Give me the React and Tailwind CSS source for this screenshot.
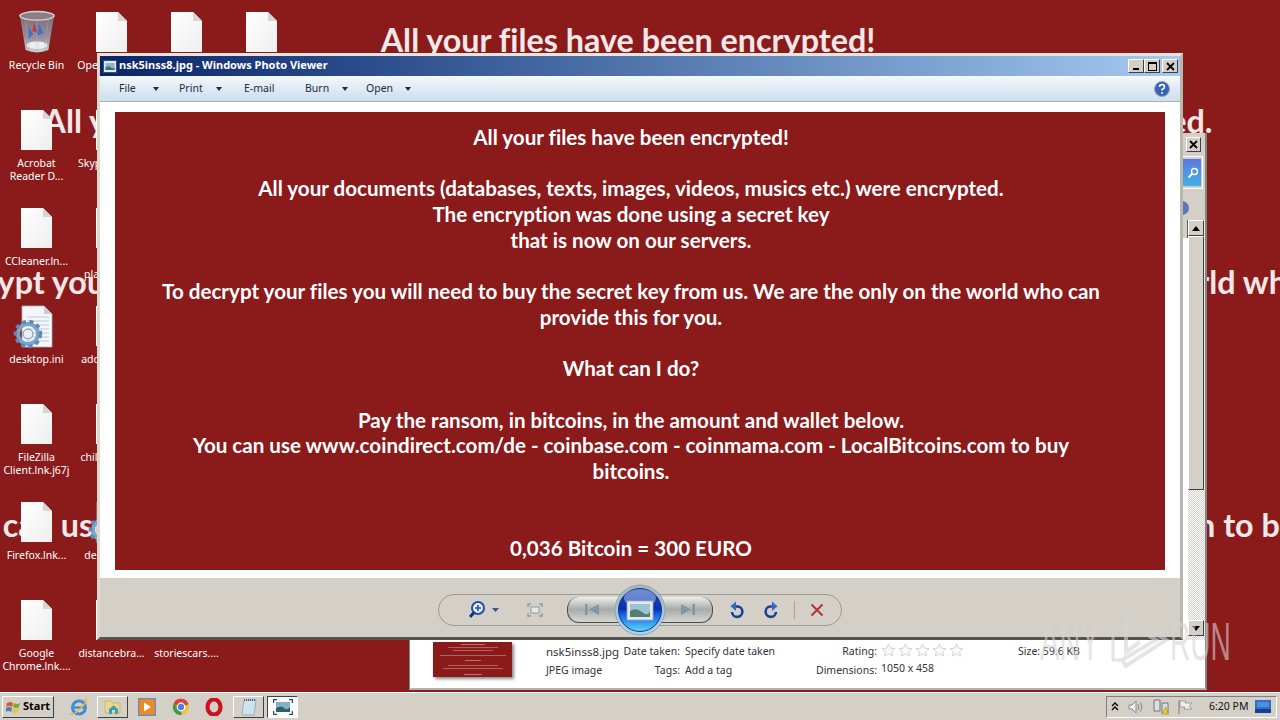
import React from 'react';

const ransomLines = [
  'All your files have been encrypted!',
  '',
  'All your documents (databases, texts, images, videos, musics etc.) were encrypted.',
  'The encryption was done using a secret key',
  'that is now on our servers.',
  '',
  'To decrypt your files you will need to buy the secret key from us. We are the only on the world who can',
  'provide this for you.',
  '',
  'What can I do?',
  '',
  'Pay the ransom, in bitcoins, in the amount and wallet below.',
  'You can use www.coindirect.com/de - coinbase.com - coinmama.com - LocalBitcoins.com to buy',
  'bitcoins.',
  '',
  '',
  '0,036 Bitcoin = 300 EURO',
];

const desktopIcons = [
  { label: ['Recycle Bin'], icon: 'bin' },
  { label: ['Acrobat', 'Reader D...'], icon: 'file' },
  { label: ['CCleaner.ln...'], icon: 'file' },
  { label: ['desktop.ini'], icon: 'ini' },
  { label: ['FileZilla', 'Client.lnk.j67j'], icon: 'file' },
  { label: ['Firefox.lnk...'], icon: 'file' },
  { label: ['Google', 'Chrome.lnk....'], icon: 'file' },

  { label: ['Opera.lnk.j67j'], icon: 'file' },
  { label: ['Skype.lnk.j67j'], icon: 'file' },
  { label: ['VLC', 'player.lnk...'], icon: 'file' },
  { label: ['additional....'], icon: 'file' },
  { label: ['childrenca....'], icon: 'file' },
  { label: ['desktop.ini'], icon: 'ini' },
  { label: ['distancebra...'], icon: 'file' },

  { label: [''], icon: 'file' },
  { label: [''], icon: 'none' },
  { label: [''], icon: 'none' },
  { label: [''], icon: 'none' },
  { label: [''], icon: 'none' },
  { label: [''], icon: 'none' },
  { label: ['storiescars....'], icon: 'file' },

  { label: [''], icon: 'file' },
];

const FileIcon = () => (
  <svg width="33" height="42" viewBox="0 0 33 42">
    <defs>
      <linearGradient id="pageFill" x1="0" y1="0" x2="1" y2="1">
        <stop offset="0" stopColor="#ffffff" />
        <stop offset="1" stopColor="#eeeeee" />
      </linearGradient>
    </defs>
    <path d="M1 1H23L32 10V41H1Z" fill="url(#pageFill)" />
    <path d="M23 1L32 10H23Z" fill="#d6d6d6" />
  </svg>
);

const BinIcon = () => (
  <svg width="38" height="46" viewBox="0 0 40 46">
    <defs>
      <linearGradient id="binFill" x1="0" y1="0" x2="0" y2="1">
        <stop offset="0" stopColor="#7f6e78" />
        <stop offset="0.6" stopColor="#9a8f9c" />
        <stop offset="1" stopColor="#c9d3d3" />
      </linearGradient>
    </defs>
    <path d="M2 6L8 42Q20 47 32 42L38 6Z" fill="url(#binFill)" />
    <ellipse cx="20" cy="6" rx="18" ry="4.5" fill="#8d7e86" stroke="#d5d5d5" strokeWidth="1.5" />
    <path d="M11 17L16 25L11 31ZM22 14L27 24L20 27Z" fill="#3f76c4" />
    <path d="M17 13L21 24L15 22Z" fill="#b5424a" />
    <ellipse cx="20" cy="37" rx="11" ry="4" fill="#e9eeee" />
    <path d="M8 10L12 41M32 10L28 41M20 11V44" stroke="#b7afb6" strokeWidth="0.6" opacity="0.7" />
  </svg>
);

const IniIcon = () => (
  <svg width="42" height="44" viewBox="0 0 42 44">
    <path d="M9 1H31L39 9V42H9Z" fill="#f4f6f8" stroke="#a9b3bd" strokeWidth="0.8" />
    <path d="M31 1L39 9H31Z" fill="#c9ced4" />
    <path d="M14 12H36M14 16H36M14 20H36M14 24H36M14 28H36M14 32H36M14 36H36" stroke="#bcc9d8" strokeWidth="1" />
    <circle cx="15" cy="29" r="10" fill="none" stroke="#7ea3c9" strokeWidth="4" />
    <circle cx="15" cy="29" r="12.5" fill="none" stroke="#5e88b5" strokeWidth="3.5" strokeDasharray="4 3.5" />
    <circle cx="15" cy="29" r="5" fill="#e9eff5" stroke="#6d8fb3" strokeWidth="1" />
  </svg>
);

const DesktopIcon = ({ label, icon }) => (
  <div className="h-[98px] w-[75px] flex flex-col items-center">
    <div className="h-[46px] w-full flex justify-center items-start">
      {icon === 'file' && <FileIcon />}
      {icon === 'bin' && <div className="-mt-[2px]"><BinIcon /></div>}
      {icon === 'ini' && <div className="-ml-[6px]"><IniIcon /></div>}
    </div>
    <div className="mt-[2px] text-white text-center text-[10.5px] leading-[13px] whitespace-nowrap">
      {label.map((line) => (
        <div key={line}>{line}</div>
      ))}
    </div>
  </div>
);

const WinButton = ({ children, className = '' }) => (
  <div className={`flex items-center justify-center bg-[#d4d0c8] border border-t-white border-l-white border-r-[#404040] border-b-[#404040] ${className}`}>
    {children}
  </div>
);

const CloseGlyph = () => (
  <svg width="9" height="9" viewBox="0 0 9 9">
    <path d="M1 1L8 8M8 1L1 8" stroke="#000" strokeWidth="1.8" />
  </svg>
);

const Arrow = () => (
  <svg width="6" height="4" viewBox="0 0 6 4" className="shrink-0">
    <path d="M0 0H6L3 4Z" fill="#1d2c40" />
  </svg>
);

const toolbarItems = [
  { name: 'File', width: 'w-[60px]', labelWidth: 'w-[34px]', arrow: true },
  { name: 'Print', width: 'w-[65px]', labelWidth: 'w-[37px]', arrow: true },
  { name: 'E-mail', width: 'w-[61px]', labelWidth: 'w-[37px]', arrow: false },
  { name: 'Burn', width: 'w-[61px]', labelWidth: 'w-[37px]', arrow: true },
  { name: 'Open', width: 'w-[50px]', labelWidth: 'w-[39px]', arrow: true },
];

const Orb = () => (
  <svg width="52" height="52" viewBox="0 0 52 52">
    <defs>
      <linearGradient id="orbBlue" x1="0" y1="0" x2="0" y2="1">
        <stop offset="0" stopColor="#1c50b8" />
        <stop offset="0.48" stopColor="#0a2fb0" />
        <stop offset="0.55" stopColor="#0a52e0" />
        <stop offset="1" stopColor="#5fd8f8" />
      </linearGradient>
      <linearGradient id="orbRing" x1="0" y1="0" x2="0" y2="1">
        <stop offset="0" stopColor="#aab4bc" />
        <stop offset="1" stopColor="#a8d4ee" />
      </linearGradient>
    </defs>
    <circle cx="26" cy="26" r="25" fill="url(#orbRing)" stroke="#8d9aa3" strokeWidth="0.8" />
    <circle cx="26" cy="26" r="21.5" fill="url(#orbBlue)" stroke="#0d3a8e" strokeWidth="1" />
    <ellipse cx="26" cy="14" rx="16" ry="9" fill="#ffffff" opacity="0.35" />
    <rect x="13" y="17" width="26" height="19" fill="#e6e8e8" stroke="#9aa8b0" strokeWidth="0.8" />
    <rect x="16" y="20" width="20" height="13" fill="#9fc3d4" />
    <path d="M16 33V27Q22 23 28 28T36 27V33Z" fill="#4d7f72" />
  </svg>
);

const RotateIcon = ({ flip }) => (
  <svg width="16" height="18" viewBox="0 0 16 18" className={flip ? '-scale-x-100' : ''}>
    <path d="M5 5.5H8.5A5.2 5.2 0 1 1 3 11" fill="none" stroke="#1c3f8f" strokeWidth="2.6" />
    <path d="M7 0.5V10L1.5 5.3Z" fill="#2f6cc5" />
  </svg>
);

const Star = () => (
  <svg width="15" height="14" viewBox="0 0 15 14">
    <path d="M7.5 1L9.4 5.1L14 5.6L10.6 8.6L11.6 13L7.5 10.7L3.4 13L4.4 8.6L1 5.6L5.6 5.1Z" fill="#fbfbfb" stroke="#cfd3d6" />
  </svg>
);

const Watermark = () => (
  <div className="absolute left-[1040px] top-[610px] w-[192px] h-[58px] text-[#d4d4d4]/60 pointer-events-none font-['Liberation_Sans'] text-[53px] leading-[58px]">
    <span className="absolute left-0 top-[3px] scale-x-[0.55] origin-left whitespace-nowrap">ANY</span>
    <svg width="62" height="58" viewBox="0 0 62 58" className="absolute left-[70px] top-0">
      <path d="M10 16H3V50H10" fill="none" stroke="currentColor" strokeWidth="3" />
      <path d="M12 2L56 30L16 56L12 50L46 30L16 11V42L30 32" fill="none" stroke="currentColor" strokeWidth="4" />
    </svg>
    <span className="absolute left-[130px] top-[3px] scale-x-[0.53] origin-left whitespace-nowrap">RUN</span>
  </div>
);

const BackWindow = () => (
  <div className="absolute left-[409px] top-[133px] w-[798px] h-[557px] flex flex-col bg-[#d4d0c8] border-r-2 border-b-2 border-l border-l-[#7a8a80] border-r-[#7a8a80] border-b-[#b5b5b0]">
    <div className="h-[507px] shrink-0 flex justify-end">
      {/* right edge of the explorer window behind the viewer */}
      <div className="w-[23px] flex flex-col items-end pt-[4px]">
        <WinButton className="w-[15px] h-[15px] mr-[4px] shrink-0">
          <CloseGlyph />
        </WinButton>
        <div className="mt-[4px] w-[21px] h-[33px] mr-[2px] shrink-0 border-y border-r border-white pr-[1px] py-[2px]">
          <div className="w-full h-[27px] bg-gradient-to-b from-[#5a78e0] to-[#3fb0e8] flex items-center justify-end pr-[2px]">
            <svg width="12" height="12" viewBox="0 0 12 12">
              <circle cx="7.5" cy="4.5" r="3" fill="none" stroke="#fff" strokeWidth="1.4" />
              <path d="M5.5 6.5L1.5 10.5" stroke="#fff" strokeWidth="1.8" />
            </svg>
          </div>
        </div>
        <div className="mt-[12px] h-[14px] w-full shrink-0">
          <div className="w-[7px] h-[14px] rounded-r-full bg-[#5a78c0]" />
        </div>
        <div className="mt-[5px] flex-1 w-full flex">
          <div className="w-[6px] flex flex-col">
            <div className="h-[18px] border-r border-[#606060] bg-[#d4d0c8]" />
            <div className="flex-1 bg-white" />
          </div>
          <div className="w-[17px] flex flex-col bg-[repeating-conic-gradient(#d4d0c8_0_25%,#ffffff_0_50%)] bg-[length:2px_2px]">
            <WinButton className="w-[16px] h-[16px] shrink-0">
              <svg width="8" height="5" viewBox="0 0 8 5"><path d="M4 0L8 5H0Z" fill="#000" /></svg>
            </WinButton>
            <div className="w-[16px] h-[254px] bg-[#d4d0c8] border border-t-white border-l-white border-r-[#404040] border-b-[#404040]" />
            <div className="flex-1" />
            <WinButton className="w-[16px] h-[16px] shrink-0 mb-[4px]">
              <svg width="8" height="5" viewBox="0 0 8 5"><path d="M4 5L8 0H0Z" fill="#000" /></svg>
            </WinButton>
          </div>
        </div>
      </div>
    </div>
    <div className="h-[48px] bg-white flex text-[10.5px] leading-[13px] text-[#333]">
      <div className="ml-[23px] mt-[2px] w-[79px] h-[35px] bg-[#8b1a1a] shadow-[2px_2px_3px_#888] flex flex-col items-center pt-[2px] gap-[2px]">
        <div className="h-px w-[24px] bg-[#e8c8c8]/50" />
        <div className="h-px w-[50px] bg-[#d8a8a8]/50" />
        <div className="h-px w-[40px] bg-[#d8a8a8]/50" />
        <div className="h-px w-[66px] bg-[#d8a8a8]/50 mt-[2px]" />
        <div className="h-px w-[16px] bg-[#e8c8c8]/50 mt-[2px]" />
        <div className="h-px w-[50px] bg-[#d8a8a8]/50 mt-[2px]" />
        <div className="h-px w-[60px] bg-[#d8a8a8]/50" />
        <div className="h-px w-[18px] bg-[#e8c8c8]/50 mt-[3px]" />
      </div>
      <div className="ml-[34px] w-[76px] pt-[5px] flex flex-col gap-[6px] whitespace-nowrap">
        <div className="text-[11.5px]">nsk5inss8.jpg</div>
        <div>JPEG image</div>
      </div>
      <div className="w-[58px] pt-[5px] flex flex-col gap-[6px] items-end whitespace-nowrap">
        <div>Date taken:</div>
        <div>Tags:</div>
      </div>
      <div className="ml-[5px] w-[136px] pt-[5px] flex flex-col gap-[6px] whitespace-nowrap">
        <div>Specify date taken</div>
        <div>Add a tag</div>
      </div>
      <div className="w-[56px] pt-[5px] flex flex-col gap-[6px] items-end whitespace-nowrap">
        <div>Rating:</div>
        <div>Dimensions:</div>
      </div>
      <div className="ml-[4px] w-[137px] pt-[3px] flex flex-col gap-[5px] whitespace-nowrap">
        <div className="flex gap-[2px]">
          <Star /><Star /><Star /><Star /><Star />
        </div>
        <div>1050 x 458</div>
      </div>
      <div className="pt-[5px] whitespace-nowrap">Size: 59.6 KB</div>
    </div>
  </div>
);

const PhotoViewer = () => (
  <div className="absolute left-[97px] top-[53px] w-[1086px] h-[587px] flex flex-col bg-[#d4d0c8] border-[3px] border-t-[#e9e5dc] border-l-[#dcd8d0] border-r-[#b9b6ae] border-b-[#55544f]">
    <div className="h-[20px] shrink-0 flex items-center bg-gradient-to-r from-[#0a246a] to-[#a6caf0] pl-[3px] pr-[2px]">
      <svg width="14" height="13" viewBox="0 0 14 13" className="shrink-0">
        <rect x="0.5" y="0.5" width="13" height="12" fill="#dfe8f0" stroke="#30507a" />
        <rect x="2.5" y="3" width="9" height="7" fill="#8fb4cc" />
        <path d="M2.5 10V7.5Q6 5.5 8 7.5T11.5 7V10Z" fill="#3f6f6a" />
      </svg>
      <div className="ml-[2px] -mt-[2px] text-white font-bold text-[11px] leading-[20px] whitespace-nowrap">nsk5inss8.jpg - Windows Photo Viewer</div>
      <div className="ml-auto flex items-center">
        <WinButton className="w-[16px] h-[14px] items-end pb-[2px]">
          <div className="w-[6px] h-[2px] bg-black" />
        </WinButton>
        <WinButton className="w-[16px] h-[14px]">
          <div className="w-[9px] h-[9px] border border-black border-t-2" />
        </WinButton>
        <WinButton className="w-[16px] h-[14px] ml-[2px]">
          <CloseGlyph />
        </WinButton>
      </div>
    </div>
    <div className="h-[26px] shrink-0 flex items-center pl-[19px] pr-[10px] bg-gradient-to-b from-[#f4f9fd] via-[#dfeaf4] to-[#cfdfec] border-b border-[#a8b4bd] text-[10.5px] text-[#1c2b3e]">
      {toolbarItems.map((item) => (
        <div key={item.name} className={`${item.width} flex items-center shrink-0`}>
          <span className={item.labelWidth}>{item.name}</span>
          {item.arrow && <Arrow />}
        </div>
      ))}
      <svg width="16" height="16" viewBox="0 0 16 16" className="ml-auto">
        <circle cx="8" cy="8" r="7.5" fill="#3a62b4" stroke="#8fa5c8" />
        <path d="M5.5 6Q5.5 3.5 8 3.5T10.5 6Q10.5 7.5 8 8.5V9.5" fill="none" stroke="#fff" strokeWidth="1.6" />
        <circle cx="8" cy="12" r="1" fill="#fff" />
      </svg>
    </div>
    <div className="h-[476px] shrink-0 bg-white pt-[10px] px-[15px]">
      <div className="h-[458px] bg-[#8b1a1a] overflow-hidden pt-[13px] pr-[18px] text-center text-white font-['Lato'] font-bold text-[20.6px] leading-[25.7px] [font-variant-ligatures:none]">
        {ransomLines.map((line, i) => (
          <div key={i} className="h-[25.7px] whitespace-nowrap">{line}</div>
        ))}
      </div>
    </div>
    <div className="flex-1 flex justify-center items-center">
      <div className="relative ml-[-1px] mt-[4px] w-[404px] h-[32px] rounded-full border border-[#9d9d96] flex items-center">
        <svg width="22" height="20" viewBox="0 0 22 20" className="ml-[30px]">
          <circle cx="9" cy="8" r="6" fill="#e8f0fa" stroke="#1f4db0" strokeWidth="2" />
          <path d="M9 5V11M6 8H12" stroke="#1f4db0" strokeWidth="1.6" />
          <path d="M5 12.5L1 17" stroke="#16307a" strokeWidth="3" />
        </svg>
        <svg width="7" height="4" viewBox="0 0 7 4" className="ml-[1px]"><path d="M0 0H7L3.5 4Z" fill="#35558f" /></svg>
        <svg width="16" height="14" viewBox="0 0 16 14" className="ml-[28px]">
          <path d="M1 4V1H4M12 1H15V4M15 10V13H12M4 13H1V10" fill="none" stroke="#8f9aa0" strokeWidth="1.4" />
          <rect x="4" y="4" width="8" height="6" fill="#e5e8e6" stroke="#8f9aa0" />
        </svg>
        <div className="absolute left-[128px] w-[146px] h-[26px] rounded-[12px] border-b border-x border-[#4a4a46] bg-gradient-to-b from-[#eceeea] via-[#a7aca9] to-[#d5d6d0] flex items-center justify-between px-[16px]">
          <svg width="16" height="11" viewBox="0 0 16 11"><path d="M1 0H3.5V11H1ZM15 0V11L5 5.5Z" fill="#7f98a8" /></svg>
          <svg width="16" height="11" viewBox="0 0 16 11"><path d="M15 0H12.5V11H15ZM1 0V11L11 5.5Z" fill="#7f98a8" /></svg>
        </div>
        <div className="absolute left-[175px] -top-[11px]">
          <Orb />
        </div>
        <div className="absolute left-[290px] flex items-center">
          <RotateIcon />
          <div className="ml-[18px]"><RotateIcon flip /></div>
          <div className="ml-[15px] w-px h-[18px] bg-[#a5a59e]" />
          <svg width="14" height="14" viewBox="0 0 14 14" className="ml-[15px]">
            <path d="M1.5 1.5L12.5 12.5M12.5 1.5L1.5 12.5" stroke="#b4323a" strokeWidth="2" />
          </svg>
        </div>
      </div>
    </div>
  </div>
);

const TaskbarApps = () => (
  <div className="ml-[15px] flex items-center">
    {/* ie */}
    <svg width="20" height="20" viewBox="0 0 20 20">
      <circle cx="10" cy="10.5" r="6.5" fill="none" stroke="#3a8fd8" strokeWidth="3" />
      <path d="M5 10.5H15" stroke="#3a8fd8" strokeWidth="2.4" />
      <path d="M2 16Q1 19 6 16T17 5Q19 1 14 3" fill="none" stroke="#e8b93a" strokeWidth="1.4" />
    </svg>
    <div className="ml-[8px] w-[31px] h-[22px] flex items-center justify-center bg-[#d4d0c8] border border-t-white border-l-white border-r-[#404040] border-b-[#404040]">
      <svg width="18" height="17" viewBox="0 0 18 17">
        <path d="M1 3H7L9 5H16V15H1Z" fill="#e8d68a" stroke="#b8a860" strokeWidth="0.6" />
        <path d="M5 16V11L9.5 7.5L14 11V16H11V12H8V16Z" fill="#3f9ac0" />
      </svg>
    </div>
    <svg width="18" height="18" viewBox="0 0 18 18" className="ml-[10px]">
      <rect x="0.5" y="0.5" width="17" height="17" fill="#ef8a22" stroke="#5d8fc4" strokeWidth="1.6" />
      <path d="M6 4.5L13 9L6 13.5Z" fill="#fff" />
    </svg>
    <svg width="18" height="18" viewBox="0 0 18 18" className="ml-[16px]">
      <path d="M9 9L1.2 6.5A8 8 0 0 1 16.6 6.5Z" fill="#d8433a" />
      <path d="M9 9L16.6 6.5A8 8 0 0 1 9.5 17Z" fill="#eec23a" />
      <path d="M9 9L9.5 17A8 8 0 0 1 1.2 6.5Z" fill="#3f9a4a" />
      <circle cx="9" cy="9" r="3.8" fill="#4a82d8" stroke="#fff" strokeWidth="1.2" />
    </svg>
    <svg width="18" height="18" viewBox="0 0 18 18" className="ml-[15px]">
      <ellipse cx="9" cy="9" rx="6.5" ry="7.5" fill="none" stroke="#c8141c" strokeWidth="4.2" />
    </svg>
    <div className="ml-[10px] w-[31px] h-[22px] flex items-center justify-center bg-[#d4d0c8] border border-t-white border-l-white border-r-[#404040] border-b-[#404040]">
      <svg width="16" height="18" viewBox="0 0 16 18">
        <path d="M3 2H15L13 17H1Z" fill="#cfe3ee" stroke="#7f9eb2" strokeWidth="0.7" />
        <path d="M3 2H15" stroke="#55656f" strokeWidth="2" strokeDasharray="1 1" />
      </svg>
    </div>
    <div className="ml-[3px] w-[31px] h-[22px] flex items-center justify-center border border-t-[#404040] border-l-[#404040] border-r-white border-b-white bg-[#fafafa]">
      <svg width="20" height="16" viewBox="0 0 20 16">
        <path d="M0.5 4V0.5H4M16 0.5H19.5V4M19.5 12V15.5H16M4 15.5H0.5V12" fill="none" stroke="#284a70" strokeWidth="1.4" />
        <rect x="3" y="3" width="14" height="10" fill="#88aec4" />
        <path d="M3 13V9Q8 6 11 9T17 8V13Z" fill="#2f5f66" />
      </svg>
    </div>
  </div>
);

const Tray = () => (
  <div className="ml-auto mr-[3px] w-[171px] h-[22px] flex items-center border border-t-[#808080] border-l-[#808080] border-r-white border-b-white text-[10.5px] text-[#111]">
    <svg width="8" height="9" viewBox="0 0 8 9" className="ml-[4px]">
      <path d="M1 4L4 1L7 4M1 8L4 5L7 8" fill="none" stroke="#000" strokeWidth="1.3" />
    </svg>
    <svg width="16" height="14" viewBox="0 0 16 14" className="ml-[9px]">
      <path d="M1 5H4L8 1V13L4 9H1Z" fill="#eee" stroke="#888" />
      <path d="M10 4Q12 7 10 10M12.5 2.5Q15.5 7 12.5 11.5" fill="none" stroke="#888" />
    </svg>
    <svg width="16" height="16" viewBox="0 0 16 16" className="ml-[9px]">
      <path d="M1 1H7V12H1ZM9 4H15V14H9Z" fill="#ddd" stroke="#777" />
      <path d="M9 15L12.5 8L15.5 15Z" fill="#f0cc20" stroke="#8a7a10" strokeWidth="0.5" />
    </svg>
    <svg width="16" height="16" viewBox="0 0 16 16" className="ml-[8px]">
      <path d="M2 1V15" stroke="#888" strokeWidth="1.2" />
      <path d="M3 2H9L8 4H15L12 7L15 10H7L8 8H3Z" fill="#eee" stroke="#888" strokeWidth="0.7" />
    </svg>
    <div className="ml-[16px] w-[46px] whitespace-nowrap">6:20 PM</div>
    <svg width="16" height="13" viewBox="0 0 16 13">
      <rect width="16" height="13" fill="#2f6fc8" />
      <rect y="9" width="16" height="4" fill="#15408a" />
      <rect x="2" y="2" width="12" height="5" fill="#4a92e0" />
    </svg>
  </div>
);

const Taskbar = () => (
  <div className="h-[28px] shrink-0 bg-[#d4d0c8] border-t border-white flex items-center pl-[2px]">
    <div className="w-[52px] h-[22px] flex items-center pl-[3px] bg-[#d4d0c8] border border-t-white border-l-white border-r-[#404040] border-b-[#404040]">
      <svg width="15" height="14" viewBox="0 0 15 14">
        <path d="M1 3Q4 1 7 3L6 7Q3 5 0 7Z" fill="#e0552a" />
        <path d="M8 3Q11 5 14 3L13 7Q10 9 7 7Z" fill="#6fae3a" />
        <path d="M0 8Q3 6 6 8L5 12Q2 10 0 12Z" fill="#3f80d0" />
        <path d="M7 8Q10 10 13 8L12 12Q9 14 6 12Z" fill="#eec23a" />
      </svg>
      <span className="ml-[2px] font-bold text-[11px] text-black">Start</span>
    </div>
    <TaskbarApps />
    <Tray />
  </div>
);

export default function App() {
  return (
    <div className="w-[1280px] h-[720px] overflow-hidden flex flex-col bg-[#8b1a1a] font-['Noto_Sans',sans-serif]">
      <div className="relative flex-1 overflow-hidden">
        {/* wallpaper is the same jpg stretched over the desktop */}
        <div className="absolute left-[-196px] top-[20px] w-[1648px] h-[640px] overflow-hidden text-center text-white/90 font-['Lato'] font-bold text-[32.3px] leading-[40.4px] [font-variant-ligatures:none]">
          {ransomLines.map((line, i) => (
            <div key={i} className="h-[40.4px] whitespace-nowrap">{line}</div>
          ))}
        </div>

        <div className="absolute left-[-1px] top-[11px] grid grid-flow-col grid-rows-[repeat(7,98px)] auto-cols-[75px]">
          {desktopIcons.map((item, i) => (
            <DesktopIcon key={i} label={item.label} icon={item.icon} />
          ))}
        </div>

        <BackWindow />
        <PhotoViewer />
        <Watermark />
      </div>
      <Taskbar />
    </div>
  );
}
